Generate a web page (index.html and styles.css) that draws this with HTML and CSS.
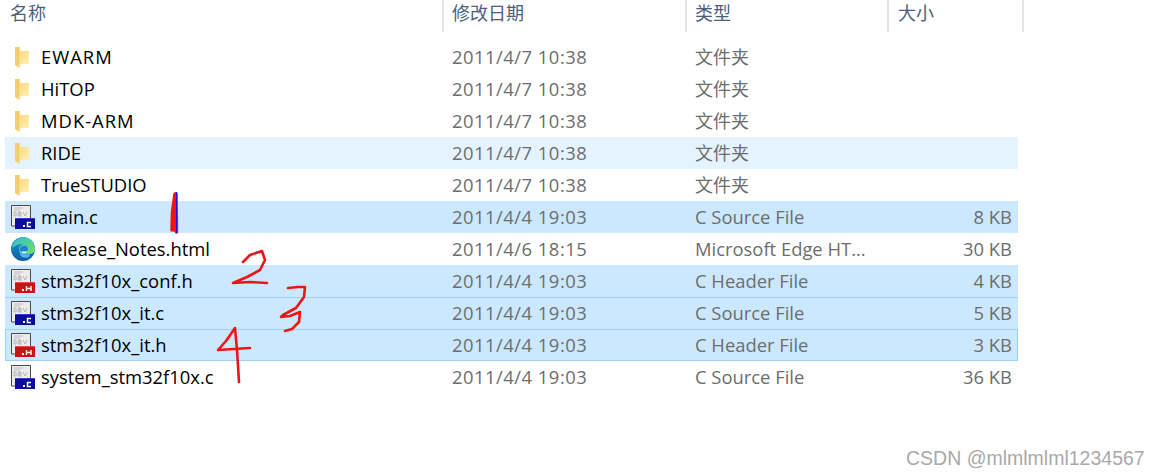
FILE: index.html
```html
<!DOCTYPE html>
<html lang="zh">
<head>
<meta charset="utf-8">
<title>Files</title>
<link rel="stylesheet" href="styles.css">
</head>
<body>
<svg class="defs" width="0" height="0" aria-hidden="true">
  <defs>
    <linearGradient id="fg" x1="0" y1="0" x2="1" y2="1">
      <stop offset="0" stop-color="#f9dc85"/>
      <stop offset="1" stop-color="#fdeeb6"/>
    </linearGradient>
    <linearGradient id="eb" x1="0" y1="0" x2="0" y2="1">
      <stop offset="0" stop-color="#1aa0c8"/>
      <stop offset="1" stop-color="#0c5aa8"/>
    </linearGradient>
    <linearGradient id="eg" x1="0" y1="0" x2="1" y2="1">
      <stop offset="0" stop-color="#35c1c8"/>
      <stop offset="1" stop-color="#6fdc6a"/>
    </linearGradient>
    <symbol id="folder" viewBox="0 0 14 21">
      <path d="M0 0H5V4H14V17H5V21L0 18Z" fill="url(#fg)"/>
      <path d="M0 0H4.500V20.500L0 18Z" fill="#f3cf6b"/>
      <path d="M5 4H14V17H5Z" fill="url(#fg)"/>
    </symbol>
    <symbol id="page" viewBox="0 0 24 24">
      <path d="M.5 .5H19.500V21H.5Z" fill="#ececec" stroke="#4a4a4a" stroke-width="1"/>
      <path d="M3 3H12M3 5H9" stroke="#bcbcbc" fill="none"/>
      <path d="M3 7H5V11H3ZM7 7H10V8H7V9H10V10H7V11H11M12 7L14 11L16 7" stroke="#b0b0b0" stroke-width=".9" fill="none"/>
    </symbol>
    <symbol id="file-c" viewBox="0 0 24 24">
      <use href="#page"/>
      <path d="M4 13H24V24H4Z" fill="#0b0ba4"/>
      <path d="M4 13H24V14H4Z" fill="#3a3ac8"/>
      <rect x="12" y="20" width="2" height="2" fill="#fff"/>
      <path d="M20 17.500H16.500V21.500H20" stroke="#fff" stroke-width="1.500" fill="none"/>
    </symbol>
    <symbol id="file-h" viewBox="0 0 24 24">
      <use href="#page"/>
      <path d="M4 13H24V24H4Z" fill="#c81414"/>
      <path d="M4 13H24V14H4Z" fill="#e84a4a"/>
      <rect x="11" y="20" width="2" height="2" fill="#fff"/>
      <path d="M15.500 17V22M20 17V22M15.500 19.500H20" stroke="#fff" stroke-width="1.400" fill="none"/>
    </symbol>
    <symbol id="edge" viewBox="0 0 24 24">
      <circle cx="12" cy="12" r="12" fill="url(#eb)"/>
      <path d="M1.500 8C5 1 12 -1 17 1C22 3 24.500 8 24 13C23.500 17 18 17.500 14 16.500C17 14 17 10 14 8.500C10 6.500 5 7 1.500 11Z" fill="url(#eg)"/>
      <circle cx="12.500" cy="12.500" r="4.200" fill="#fff"/>
      <path d="M8.300 13C8.500 9 12 7.700 15 8.700C17.500 10 17.500 13 16 14.500H10.500C11 17 15 18 18.500 16.500V19.500C14 22 8 19 8.300 13Z" fill="#1688c4"/>
      <path d="M10.500 14.500C11 17 15 18 18.500 16.500V19.500C16 21 13 21 11 20C9 18.500 8.500 16 8.300 13Z" fill="#4fb5ea"/>
    </symbol>
  </defs>
</svg>

<main class="explorer">
  <header class="head">
    <div class="hcell hname">名称</div>
    <div class="hcell hdate">修改日期</div>
    <div class="hcell htype">类型</div>
    <div class="hcell hsize">大小</div>
  </header>
  <div class="rows">
    <div class="row">
      <div class="name"><svg class="ifolder"><use href="#folder"/></svg><span class="wide">EWARM</span></div>
      <div class="meta date">2011/4/7 10:38</div><div class="meta cjk">文件夹</div><div class="size"></div>
    </div>
    <div class="row">
      <div class="name"><svg class="ifolder"><use href="#folder"/></svg>HiTOP</div>
      <div class="meta date">2011/4/7 10:38</div><div class="meta cjk">文件夹</div><div class="size"></div>
    </div>
    <div class="row">
      <div class="name"><svg class="ifolder"><use href="#folder"/></svg><span class="wide">MDK-ARM</span></div>
      <div class="meta date">2011/4/7 10:38</div><div class="meta cjk">文件夹</div><div class="size"></div>
    </div>
    <div class="row hover">
      <div class="name"><svg class="ifolder"><use href="#folder"/></svg>RIDE</div>
      <div class="meta date">2011/4/7 10:38</div><div class="meta cjk">文件夹</div><div class="size"></div>
    </div>
    <div class="row">
      <div class="name"><svg class="ifolder"><use href="#folder"/></svg>TrueSTUDIO</div>
      <div class="meta date">2011/4/7 10:38</div><div class="meta cjk">文件夹</div><div class="size"></div>
    </div>
    <div class="row sel">
      <div class="name"><svg class="ifile"><use href="#file-c"/></svg>main.c</div>
      <div class="meta date">2011/4/4 19:03</div><div class="meta">C Source File</div><div class="size">8 KB</div>
    </div>
    <div class="row">
      <div class="name"><svg class="ifile"><use href="#edge"/></svg>Release_Notes.html</div>
      <div class="meta date">2011/4/6 18:15</div><div class="meta">Microsoft Edge HT...</div><div class="size">30 KB</div>
    </div>
    <div class="row sel">
      <div class="name"><svg class="ifile"><use href="#file-h"/></svg>stm32f10x_conf.h</div>
      <div class="meta date">2011/4/4 19:03</div><div class="meta">C Header File</div><div class="size">4 KB</div>
    </div>
    <div class="row sel topline">
      <div class="name"><svg class="ifile"><use href="#file-c"/></svg>stm32f10x_it.c</div>
      <div class="meta date">2011/4/4 19:03</div><div class="meta">C Source File</div><div class="size">5 KB</div>
    </div>
    <div class="row sel focus">
      <div class="name"><svg class="ifile"><use href="#file-h"/></svg>stm32f10x_it.h</div>
      <div class="meta date">2011/4/4 19:03</div><div class="meta">C Header File</div><div class="size">3 KB</div>
    </div>
    <div class="row">
      <div class="name"><svg class="ifile"><use href="#file-c"/></svg>system_stm32f10x.c</div>
      <div class="meta date">2011/4/4 19:03</div><div class="meta">C Source File</div><div class="size">36 KB</div>
    </div>
  </div>
</main>

<svg class="ink" width="1160" height="475" aria-hidden="true">
  <g class="red">
    <path class="thick" d="M175 194L172.500 212L172 230M176 194L176.500 232M174 205L174.500 230"/>
    <path d="M243 262L250 255L262 251L265 260L260 270L247 277L233 283L250 282L267 283"/>
    <path d="M288 288L298 287L305 287L304 297L296 308L283 315L281 317L290 316L300 312L299 322L292 329L285 331"/>
    <path d="M235 328L226 341L218 350L234 349L250 348M235 328L237 350L239 382"/>
  </g>
  <path class="blue" d="M176.500 192L176.500 233"/>
</svg>
<div class="mark">CSDN @mlmlmlml1234567</div>
</body>
</html>
```
FILE: styles.css
```css
html, body {
  margin: 0;
  padding: 0;
  background: #fff;
}
body {
  width: 1160px;
  height: 475px;
  overflow: hidden;
  position: relative;
  font-family: "Open Sans", "Noto Sans CJK SC", sans-serif;
  font-size: 18.400px;
}
.defs {
  position: absolute;
}
.explorer {
  display: flex;
  flex-direction: column;
}
.head {
  display: grid;
  grid-template-columns: 444px 243px 202px 135px;
  height: 32px;
  color: #4c607a;
  font-family: "Noto Sans CJK SC", sans-serif;
  font-size: 18px;
  line-height: 25px;
}
.hcell {
  padding-left: 8px;
  border-right: 2px solid #e5e5e5;
  box-sizing: border-box;
}
.hname { padding-left: 10px; }
.hsize { padding-left: 9px; }
.rows {
  display: flex;
  flex-direction: column;
  margin: 9px 0 0 5px;
  width: 1013px;
}
.row {
  display: grid;
  grid-template-columns: 437px 243px 203px 124px;
  height: 32px;
  line-height: 24px;
  box-sizing: border-box;
  align-items: center;
  color: #6d6d6d;
}
.name {
  display: flex;
  align-items: center;
  color: #000;
  padding-left: 6px;
}
.wide {
  letter-spacing: 1px;
}
.meta {
  padding-left: 10px;
  white-space: nowrap;
}
.date {
  letter-spacing: .5px;
}
.cjk {
  font-size: 18px;
}
.size {
  text-align: right;
}
.ifolder {
  width: 14px;
  height: 21px;
  margin: 0 12px 0 4px;
}
.ifile {
  width: 24px;
  height: 24px;
  margin-right: 6px;
}
.hover {
  background: #e5f3ff;
}
.sel {
  background: #cce8ff;
}
.topline {
  box-shadow: inset 0 1px 0 #99d1ff;
}
.focus {
  box-shadow: inset 0 0 0 1px #99d1ff;
}
.ink {
  position: absolute;
  left: 0;
  top: 0;
  pointer-events: none;
}
.red {
  fill: none;
  stroke: #f01414;
  stroke-width: 2.600;
  stroke-linecap: round;
  stroke-linejoin: round;
}
.thick {
  stroke-width: 3.500;
}
.blue {
  fill: none;
  stroke: #1414e0;
  stroke-width: 1;
}
.mark {
  position: absolute;
  left: 906px;
  top: 446px;
  color: #a9a9a9;
  font-family: "Liberation Sans", sans-serif;
  font-size: 19.500px;
  line-height: 24px;
  white-space: nowrap;
}
```
